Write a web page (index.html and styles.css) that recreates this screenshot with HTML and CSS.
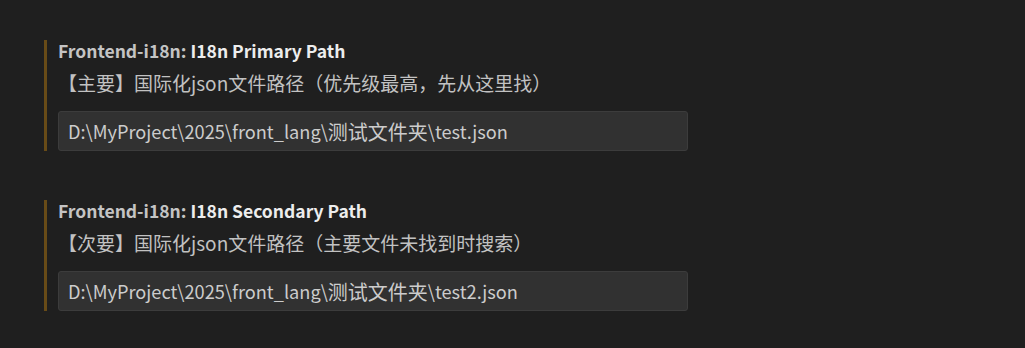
FILE: index.html
```html
<!DOCTYPE html>
<html lang="zh-CN">
<head>
<meta charset="utf-8">
<title>Settings</title>
<link rel="stylesheet" href="styles.css">
</head>
<body>
  <div class="settings">
    <div class="setting">
      <div class="title"><span class="category">Frontend-i18n: </span><span class="label">I18n Primary Path</span></div>
      <div class="desc">【主要】国际化json文件路径（优先级最高，先从这里找）</div>
      <div class="input">D:\MyProject\2025\front_lang\<span class="zh">测试文件夹</span>\test.json</div>
    </div>
    <div class="setting">
      <div class="title"><span class="category">Frontend-i18n: </span><span class="label">I18n Secondary Path</span></div>
      <div class="desc">【次要】国际化json文件路径（主要文件未找到时搜索）</div>
      <div class="input">D:\MyProject\2025\front_lang\<span class="zh">测试文件夹</span>\test2.json</div>
    </div>
  </div>
</body>
</html>
```
FILE: styles.css
```css
html, body {
  margin: 0;
  padding: 0;
  background: #1f1f1f;
  height: 100%;
}
body {
  font-family: "Noto Sans CJK SC", "Noto Sans", sans-serif;
  color: #cccccc;
}
.settings {
  display: flex;
  flex-direction: column;
  gap: 49px;
  padding: 40px 0 0 44px;
}
.setting {
  border-left: 3px solid #684b17;
  padding-left: 11px;
  width: 630px;
}
.title {
  font-size: 17.5px;
  font-weight: 700;
  line-height: 22px;
  height: 22px;
  white-space: nowrap;
}
.category {
  color: #c4c4c4;
}
.label {
  color: #ededed;
}
.desc {
  margin-top: 8px;
  font-size: 19px;
  line-height: 26px;
  color: #c2c2c2;
  white-space: nowrap;
}
.input {
  margin-top: 15px;
  box-sizing: border-box;
  height: 40px;
  width: 630px;
  background: #313131;
  border: 1px solid #3c3c3c;
  border-radius: 3px;
  padding: 0 9px;
  display: flex;
  align-items: center;
  font-size: 18.2px;
  color: #cccccc;
  white-space: nowrap;
}
.zh {
  font-size: 20px;
}
```
